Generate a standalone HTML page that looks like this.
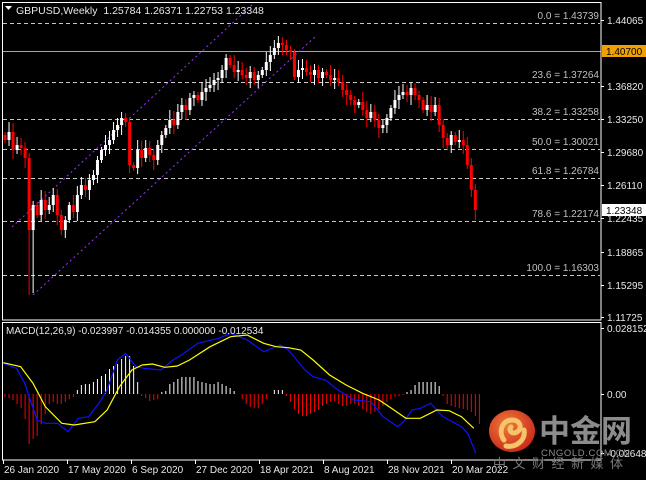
<!DOCTYPE html>
<html><head><meta charset="utf-8"><style>
html,body{margin:0;padding:0;background:#000;width:646px;height:480px;overflow:hidden}
svg{display:block}
text{font-family:"Liberation Sans","Noto Sans CJK SC",sans-serif}
</style></head><body>
<svg id="s" width="646" height="480" xmlns="http://www.w3.org/2000/svg">
<rect width="646" height="480" fill="#000"/>
<g id="grid"></g>
<g id="cand"></g>
<g id="macd"></g>
<rect x="2.5" y="2.5" width="598.5" height="317.5" fill="none" stroke="#fff" stroke-width="1"/>
<rect x="2.5" y="322.5" width="598.5" height="137.5" fill="none" stroke="#fff" stroke-width="1"/>
<polygon points="5,6 12,6 8.5,10" fill="#fff"/>
<text x="16" y="14" font-size="10.5" fill="#e8e8e8">GBPUSD,Weekly&#160;&#160;1.25784 1.26371 1.22753 1.23348</text>
<text x="6" y="334" font-size="10" fill="#e8e8e8">MACD(12,26,9) -0.023997 -0.014355 0.000000 -0.012534</text>
<g id="axis" font-size="10" fill="#e8e8e8"></g>
<defs><radialGradient id="lg" cx="0.4" cy="0.35" r="0.7"><stop offset="0" stop-color="#f07a3a"/><stop offset="1" stop-color="#c8281a"/></radialGradient></defs>
<ellipse cx="512" cy="431" rx="23" ry="21" fill="url(#lg)"/>
<path d="M504,440 C498,432 502,420 512,420 C520,420 523,428 517,432 C512,435 508,430 511,427 M506,446 C516,448 526,440 524,430" fill="none" stroke="#f6c56a" stroke-width="5" stroke-linecap="round"/>
<text x="539" y="442" font-size="31" font-weight="bold" fill="#8c8c8c" font-family="Noto Sans CJK SC,sans-serif">中金网</text>
<text x="541" y="456" font-size="9.5" fill="#8c8c8c" letter-spacing="0.6">CNGOLD.COM.CN</text>
<text x="493" y="468" font-size="13" fill="#7a7a7a" letter-spacing="6.5" font-family="Noto Sans CJK SC,sans-serif">中文财经新媒体</text>
</svg>
<script>
var NS="http://www.w3.org/2000/svg";
function el(p,t,a,txt){var e=document.createElementNS(NS,t);for(var k in a)e.setAttribute(k,a[k]);if(txt!=null)e.textContent=txt;document.getElementById(p).appendChild(e);return e;}
var fib=[[23,"0.0 = 1.43739"],[82,"23.6 = 1.37264"],[119,"38.2 = 1.33258"],[149,"50.0 = 1.30021"],[178,"61.8 = 1.26784"],[221,"78.6 = 1.22174"],[275,"100.0 = 1.16303"]];
fib.forEach(function(f){el("grid","line",{x1:3,x2:600,y1:f[0]+.5,y2:f[0]+.5,stroke:"#c8c8c8","stroke-dasharray":"4,3"});
el("grid","text",{x:599,y:f[0]-4,"font-size":"10",fill:"#c0c0c0","text-anchor":"end"},f[1]);});
el("grid","line",{x1:3,x2:601,y1:51.5,y2:51.5,stroke:"#f0a000"});
el("grid","line",{x1:12,y1:227,x2:253,y2:4,stroke:"#9933ff","stroke-dasharray":"2,3"});
el("grid","line",{x1:33,y1:295,x2:316,y2:36,stroke:"#9933ff","stroke-dasharray":"2,3"});
var c=[140,132,150,145,148,158,230,205,215,200,210,205,195,215,230,220,205,212,195,185,190,180,175,160,150,145,140,130,125,118,122,165,168,150,158,148,155,160,145,135,128,120,125,112,105,110,98,95,100,92,88,85,80,78,70,58,65,72,70,75,78,72,80,75,70,62,55,48,43,45,50,52,77,70,68,72,75,70,78,72,75,80,78,82,90,95,100,105,102,110,118,112,120,128,125,118,108,100,95,92,95,88,95,100,110,105,112,105,125,138,145,135,142,140,145,165,190,210];
var prev=135;
c.forEach(function(cl,i){var x=5+4.02*i;var o=prev;var up=cl<o;var top=Math.min(o,cl),bot=Math.max(o,cl);
var hi=top-3-((i*7)%8),lo=bot+3+((i*3)%8);
if(i==6){lo=295;} if(i==7){lo=293;} if(i==68){hi=36;}
var col=up?"#fff":"#ff0000";
el("cand","line",{x1:x,x2:x,y1:hi,y2:lo,stroke:col});
el("cand","rect",{x:x-1.5,y:top,width:3,height:Math.max(1.5,bot-top),fill:col});
prev=cl;});
[[20,"1.44065"],[86,"1.36820"],[119,"1.33250"],[152,"1.29680"],[185,"1.26110"],[218,"1.22435"],[252,"1.18865"],[285,"1.15295"],[317,"1.11725"],[328,"0.028152"],[394,"0.00"],[453,"-0.026481"]].forEach(function(a){
el("axis","line",{x1:601,x2:604,y1:a[0]+.5,y2:a[0]+.5,stroke:"#fff"});
el("axis","text",{x:607,y:a[0]+4},a[1]);});
el("axis","rect",{x:602,y:45,width:44,height:12,fill:"#f0a000"});
el("axis","text",{x:606,y:55,fill:"#000"},"1.40700");
el("axis","rect",{x:602,y:204,width:44,height:12,fill:"#fff"});
el("axis","text",{x:606,y:214,fill:"#000"},"1.23348");
["26 Jan 2020","17 May 2020","6 Sep 2020","27 Dec 2020","18 Apr 2021","8 Aug 2021","28 Nov 2021","20 Mar 2022"].forEach(function(d,i){var x=3+64*i;
el("axis","line",{x1:x+.5,x2:x+.5,y1:460,y2:464,stroke:"#fff"});
el("axis","text",{x:x+1,y:473},d);});
function tr(pts){return pts.map(function(p){return (p[0]/2.427).toFixed(1)+","+(p[1]/3+240).toFixed(1)}).join(" ");}
var hv=[-3,-4,-6,-10,-14,-25,-50,-45,-42,-30,-20,-10,-8,-10,-10,-8,-5,-3,4,9,10,10,12,15,18,20,25,28,30,35,38,38,28,12,-2,-4,-7,-6,-5,2,3,10,12,15,17,17,17,17,13,12,11,10,10,12,10,8,6,3,0,-5,-10,-13,-14,-14,-10,-5,0,4,4,4,-2,-8,-15,-20,-22,-22,-20,-18,-16,-12,-10,-8,-7,-10,-12,-12,-10,-10,-12,-15,-18,-20,-18,-15,-12,-8,-5,-3,-2,-1,2,4,9,12,12,12,12,12,8,-2,-10,-12,-13,-14,-15,-16,-18,-22,-30];
hv.forEach(function(v,i){var x=5+4.02*i;if(v==0)return;
el("macd","line",{x1:x,x2:x,y1:394,y2:394-v,stroke:v>0?"#fff":"#ff0000"});});
el("macd","polyline",{fill:"none",stroke:"#1010ff","stroke-width":"1.2",points:tr([[8,370],[40,385],[60,430],[90,540],[110,550],[140,550],[165,575],[190,535],[215,530],[240,490],[260,450],[285,360],[305,340],[330,380],[350,385],[390,390],[420,360],[440,345],[480,310],[530,295],[560,280],[600,300],[640,335],[680,315],[700,330],[740,390],[760,410],[790,420],[820,450],[860,480],[900,485],[930,530],[965,560],[980,545],[1000,510],[1020,505],[1045,490],[1075,530],[1120,560],[1135,580],[1155,640]])});
el("macd","polyline",{fill:"none",stroke:"#ffff00","stroke-width":"1.2",points:tr([[8,368],[50,380],[80,430],[110,500],[150,550],[180,555],[230,545],[260,510],[290,440],[320,390],[345,375],[370,372],[400,382],[430,378],[460,360],[510,320],[560,290],[600,285],[640,310],[670,320],[700,323],[730,330],[760,360],[800,405],[840,435],[880,460],[920,480],[950,505],[985,535],[1020,535],[1060,510],[1090,512],[1120,530],[1150,565]])});
</script>
</body></html>
